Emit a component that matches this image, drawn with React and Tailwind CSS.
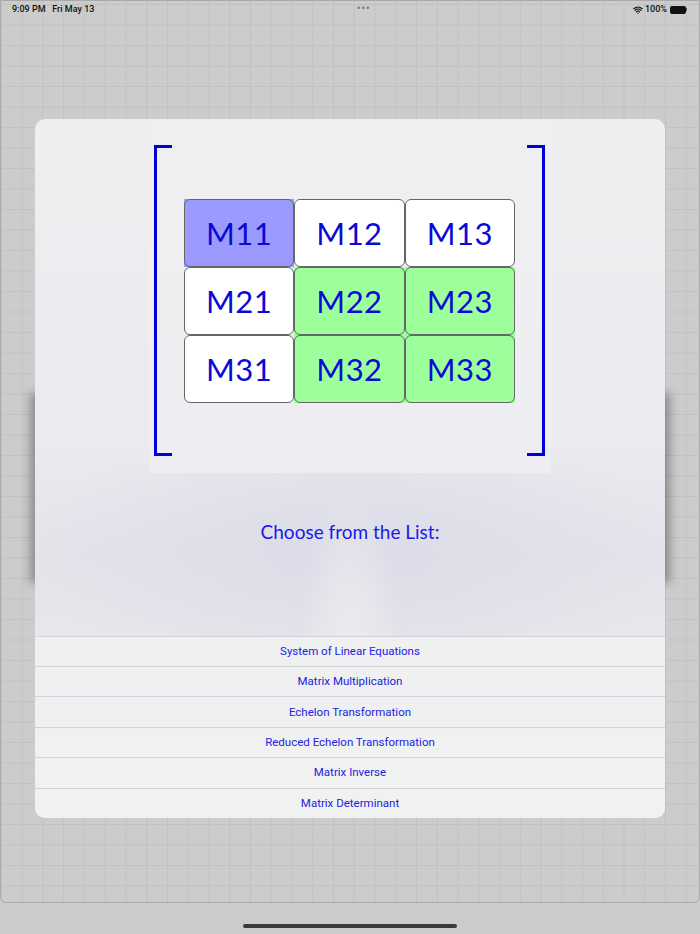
import { Wifi } from 'lucide-react';

const cells = [
  ['M11', 'purple'], ['M12', 'white'], ['M13', 'white'],
  ['M21', 'white'], ['M22', 'green'], ['M23', 'green'],
  ['M31', 'white'], ['M32', 'green'], ['M33', 'green'],
];

const items = [
  'System of Linear Equations',
  'Matrix Multiplication',
  'Echelon Transformation',
  'Reduced Echelon Transformation',
  'Matrix Inverse',
  'Matrix Determinant',
];

function Cell({ label, tone }) {
  const outer = tone === 'purple' ? 'bg-[#9b9bff]' : tone === 'green' ? 'bg-[#9cff9c]' : 'bg-transparent';
  const inner = tone === 'purple' ? 'bg-[#9b9bff]' : tone === 'green' ? 'bg-[#9cff9c]' : 'bg-white';
  return (
    <div className={`${outer} h-[68px]`}>
      <div className={`${inner} h-full rounded-[6px] border border-[#666] flex items-center justify-center text-[31px] text-[#0a0ad6] font-['Lato',sans-serif] tracking-[0.5px]`}>
        {label}
      </div>
    </div>
  );
}

function Bracket({ side }) {
  const cls = side === 'left' ? 'border-l-[3px]' : 'border-r-[3px]';
  return <div className={`w-[18px] h-[311px] border-y-[3px] ${cls} border-[#0000dd]`} />;
}

export default function App() {
  return (
    <div className="w-[700px] h-[934px] bg-[#cccccc] flex flex-col font-['Roboto',sans-serif] overflow-hidden">
      <div className="relative h-[903px] border border-[#a9a9a9] rounded-b-[6px] bg-[#cccccc] bg-[linear-gradient(to_right,#c2c2c2_1px,transparent_1px),linear-gradient(to_bottom,#c2c2c2_1px,transparent_1px)] bg-[size:20.75px_20.5px] bg-[position:0px_3px]">
        <div className="h-[17px] flex items-center justify-between pl-[11px] pr-[12px] text-[9px] font-medium text-[#111]">
          <span className="whitespace-pre">9:09 PM   Fri May 13</span>
          <span className="tracking-[1px] text-[#777] text-[10px] leading-none -mt-[2px]">•••</span>
          <div className="flex items-center gap-[2px]">
            <Wifi className="w-[10px] h-[10px]" strokeWidth={3} />
            <span>100%</span>
            <div className="flex items-center ml-[1px]">
              <div className="w-[16px] h-[8px] rounded-[2px] bg-[#111]" />
              <div className="w-[1px] h-[3px] bg-[#555]" />
            </div>
          </div>
        </div>

        <div className="absolute left-[29px] right-[29px] top-[392px] h-[190px] bg-black/30 blur-[5px]" />

        <div className="relative mt-[101px] mx-[34px] h-[699px] rounded-[10px] overflow-hidden flex flex-col bg-[#e9e9ee] bg-[radial-gradient(ellipse_50px_170px_at_50%_76%,#ececee,transparent),radial-gradient(ellipse_320px_140px_at_50%_62%,#dcdce9,transparent),linear-gradient(to_bottom,#efeff1,#ebebf0_45%,#e3e3ea_62%,#e8e8ec_78%,#eeeef0_90%)]">
          <div className="ml-[114px] w-[402px] h-[354px] bg-[#efeff3]/80 flex items-start pt-[26px] pl-[5px]">
            <Bracket side="left" />
            <div className="ml-[12px] mt-[54px] w-[331px] grid grid-cols-3">
              {cells.map(([l, t]) => <Cell key={l} label={l} tone={t} />)}
            </div>
            <div className="ml-[12px]"><Bracket side="right" /></div>
          </div>

          <div className="flex-1 flex items-center justify-center pb-[44px]">
            <span className="text-[19px] text-[#1a1ae8] font-['Lato',sans-serif]">Choose from the List:</span>
          </div>

          <div className="flex flex-col">
            {items.map((it) => (
              <div key={it} className="h-[30.4px] border-t border-[#d4d4d8] bg-[#f0f1f1]/90 flex items-center justify-center">
                <span className="text-[11.5px] text-[#2222e0]">{it}</span>
              </div>
            ))}
          </div>
        </div>
      </div>
      <div className="flex-1 flex items-center justify-center">
        <div className="w-[214px] h-[4px] rounded-full bg-[#3a3a3a] mt-[15px]" />
      </div>
    </div>
  );
}
